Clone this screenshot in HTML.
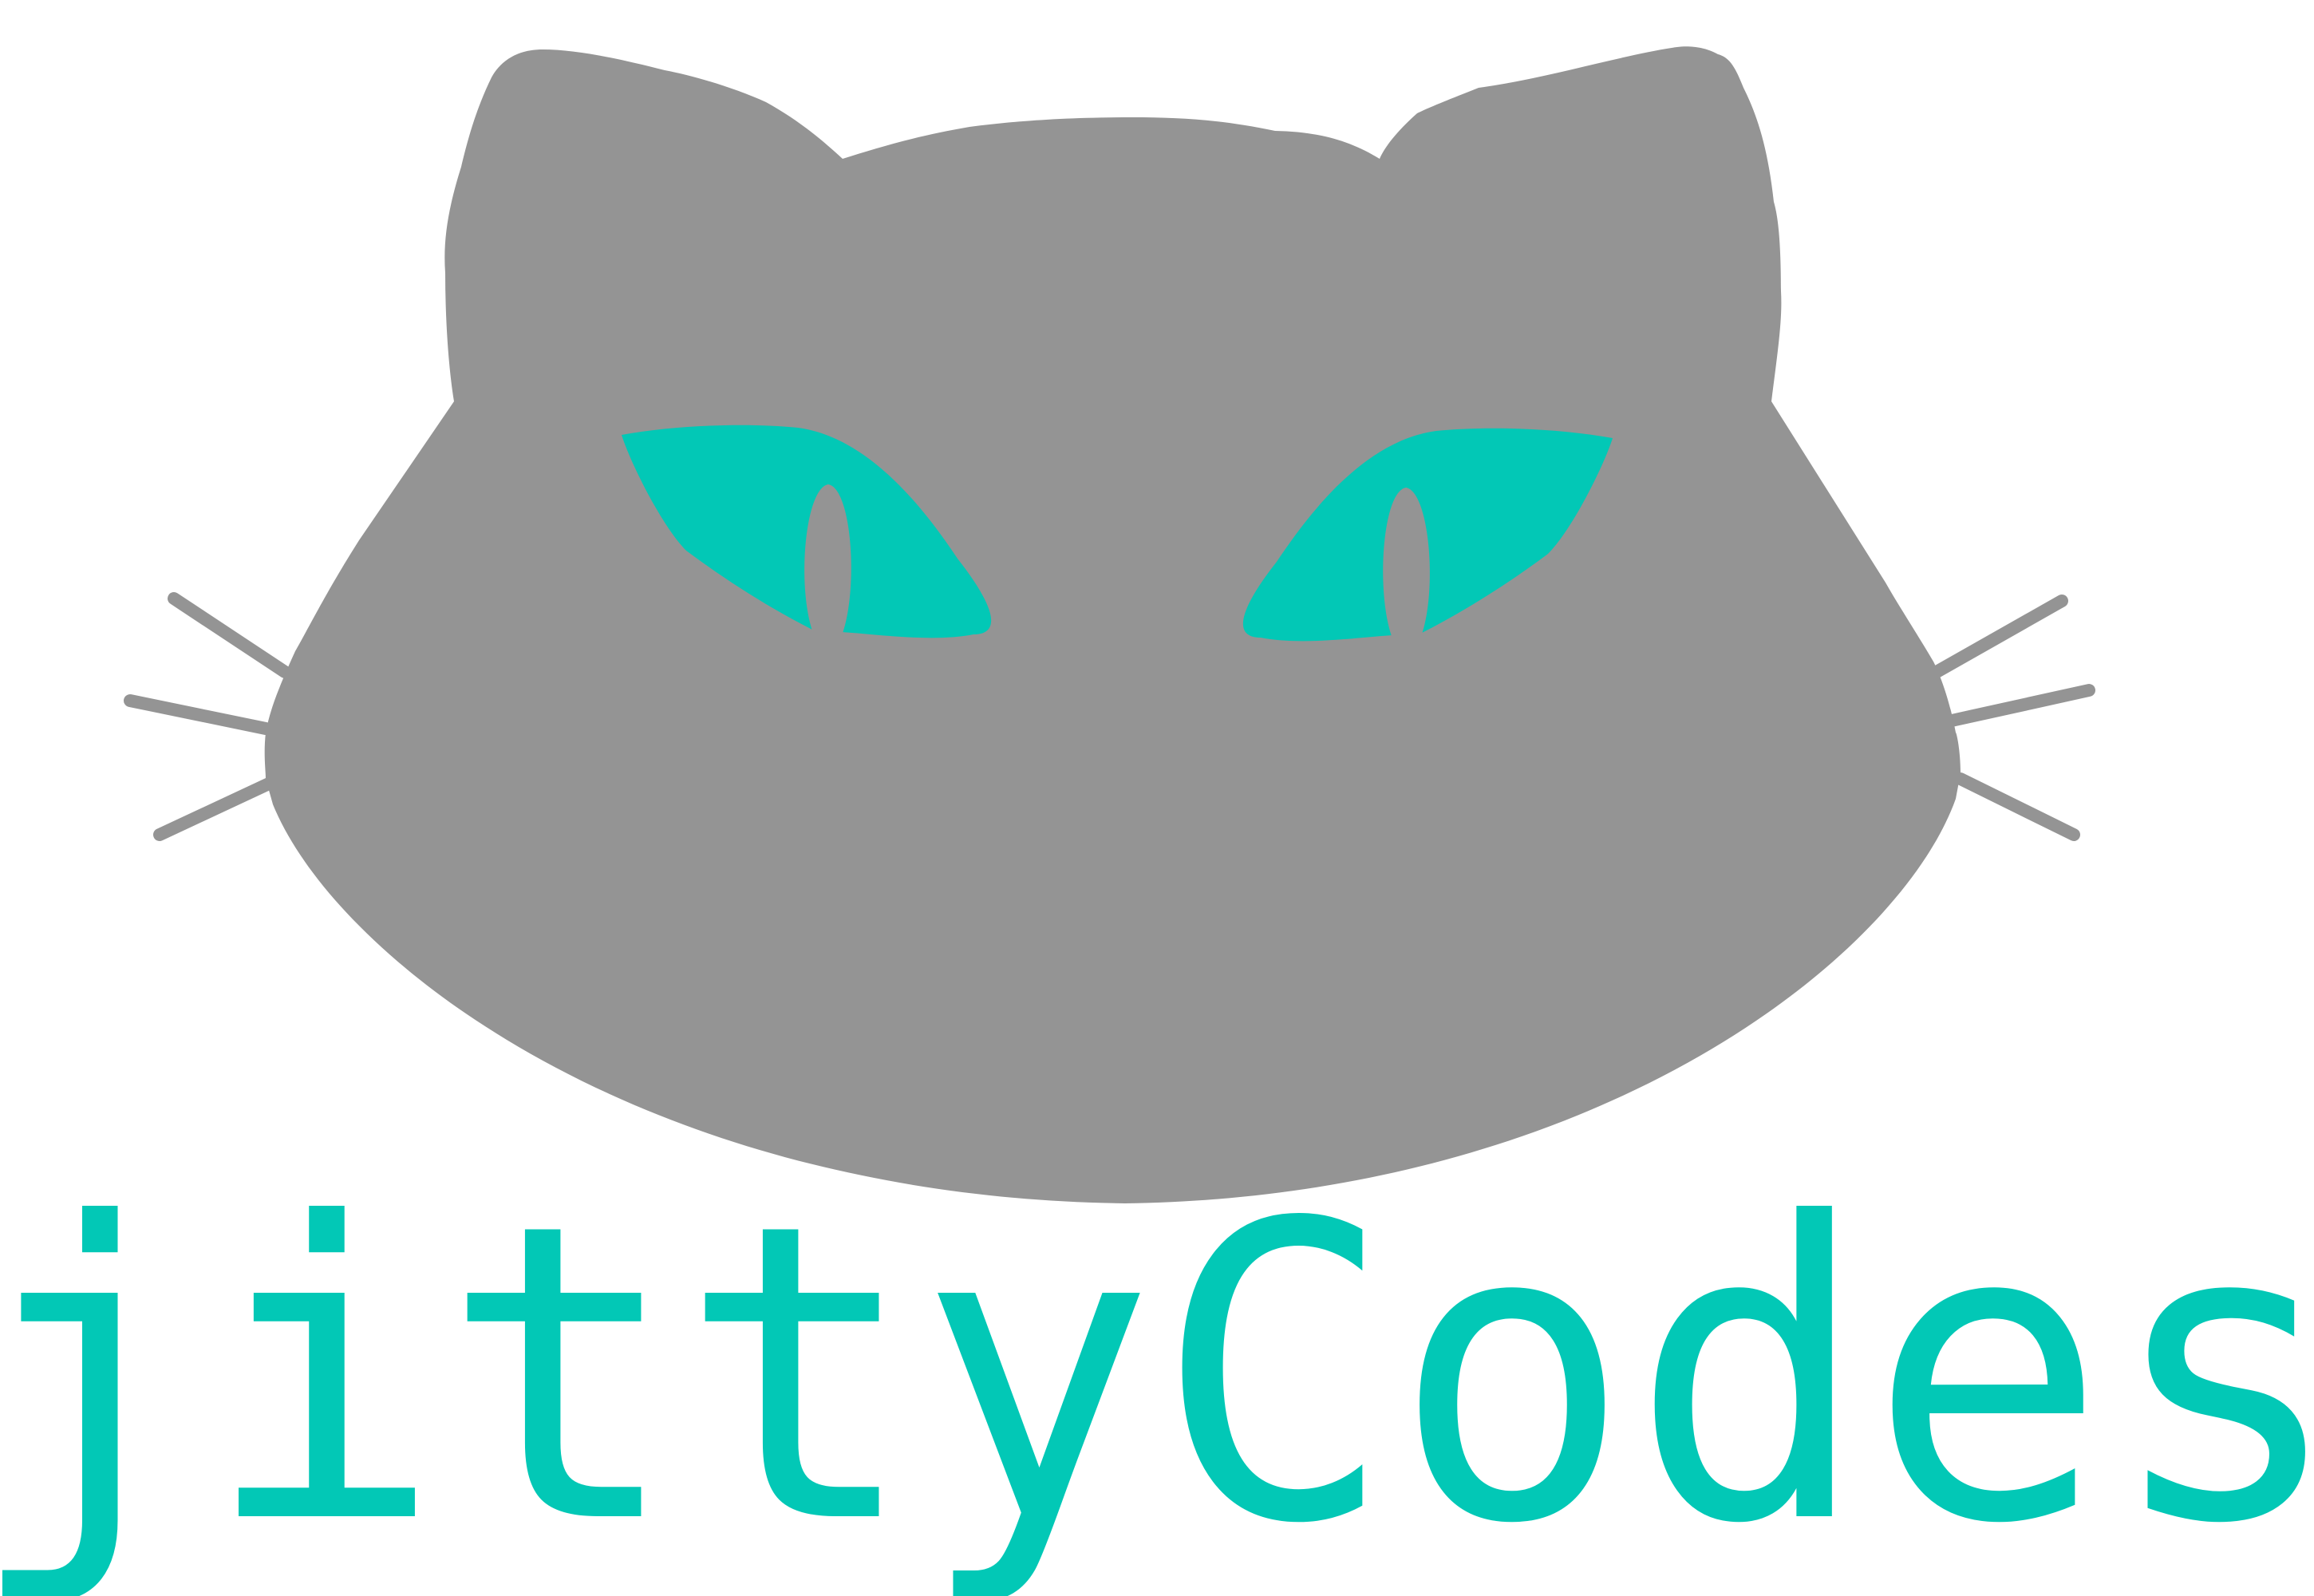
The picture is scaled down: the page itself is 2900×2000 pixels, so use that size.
<!DOCTYPE html>
<html><head><style>html,body{margin:0;padding:0;background:#fff;width:2900px;height:2000px;overflow:hidden}</style></head>
<body>
<svg width="2900" height="2000" viewBox="0 0 2900 2000" xmlns="http://www.w3.org/2000/svg">
<g stroke="#949494" stroke-width="16" stroke-linecap="round">
<line x1="218" y1="750" x2="357" y2="842"/>
<line x1="163" y1="878" x2="333" y2="913"/>
<line x1="200" y1="1046" x2="337" y2="982"/>
<line x1="2584" y1="753" x2="2427" y2="842"/>
<line x1="2618" y1="865" x2="2446" y2="903"/>
<line x1="2599" y1="1046" x2="2457" y2="976"/>
</g>
<path fill="#949494" d="M680,62 C650,62 628,75 616,97 C595,140 585,180 578,209 C562,260 555,300 558,342 C558,400 562,460 569,503
L450,677 C410,740 385,790 370,816 C350,860 338,890 333,918 C330,945 333,965 333,976 L342,1008
C420,1200 800,1500 1410,1508 C2000,1500 2380,1200 2451,1001
L2457,969 C2457,940 2452,918 2451,918 C2440,860 2423,829 2423,829 C2400,790 2380,760 2363,730 L2220,503
C2228,440 2234,400 2232,365 C2232,300 2228,270 2223,253 C2215,180 2200,140 2185,110 C2175,85 2168,72 2153,68
C2130,55 2105,58 2095,60 C2030,70 1930,100 1853,110 C1815,125 1790,135 1776,142 C1750,165 1735,185 1729,199
C1690,175 1650,165 1598,164 C1530,150 1480,147 1419,147 C1330,147 1270,152 1215,159 C1150,170 1100,185 1056,199
C1030,175 1000,150 960,128 C920,110 870,95 833,88 C770,72 720,62 680,62 Z"/>
<g id="eye">
<path fill="#02c8b6" d="M779,545 C850,532 940,530 1000,536 C1090,548 1160,640 1200,700 C1255,770 1250,795 1220,795 C1170,805 1100,795 1055,792 L1020,790 C960,760 900,720 860,690 C830,660 790,580 779,545 Z"/>
<path fill="#949494" d="M1038,607 C1008,612 998,740 1020,796 L1055,796 C1076,740 1068,612 1038,607 Z"/>
</g>
<use href="#eye" transform="translate(2800,4) scale(-1,1)"/>
<text x="-42" y="1900" font-family="'DejaVu Sans Mono','Liberation Mono',monospace" font-size="512" fill="#02c8b6" textLength="2980" lengthAdjust="spacingAndGlyphs">jittyCodes</text>
</svg>
</body></html>
